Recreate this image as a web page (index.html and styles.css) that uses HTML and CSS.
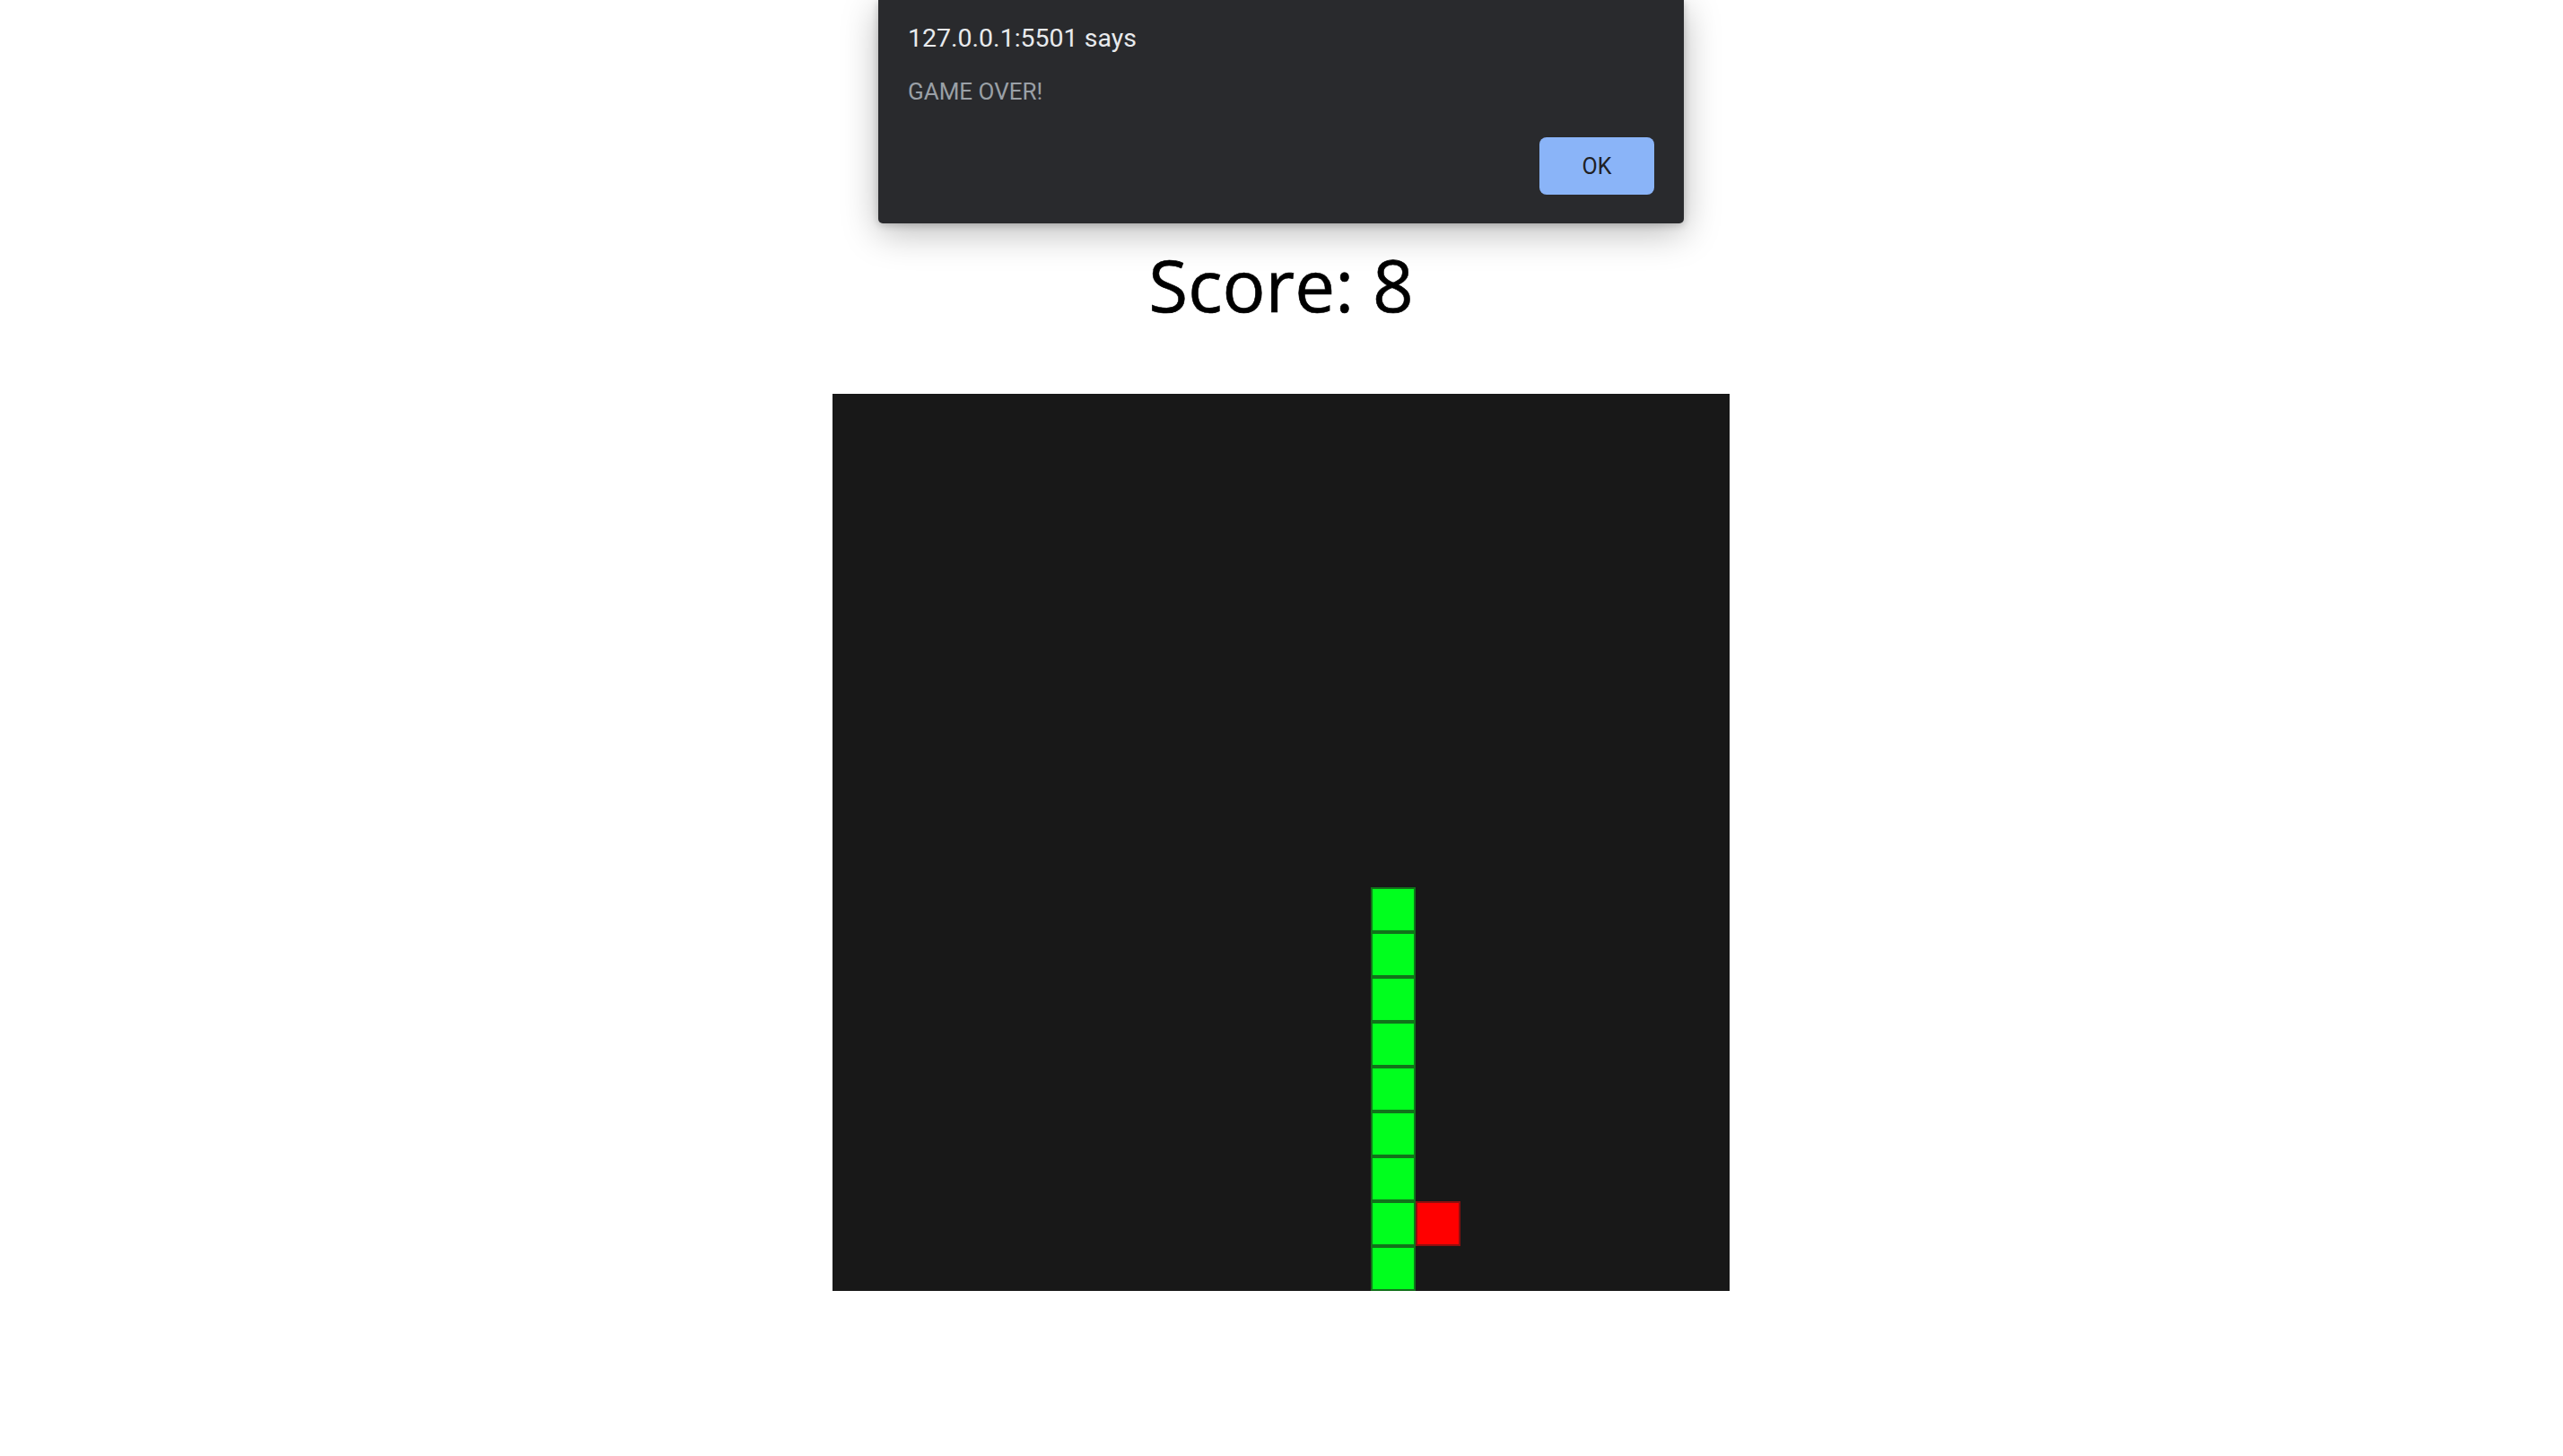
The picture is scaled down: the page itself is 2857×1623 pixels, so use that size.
FILE: index.html
```html
<!DOCTYPE html>
<html lang="en">
<head>
<meta charset="utf-8">
<title>Snake</title>
<link rel="stylesheet" href="styles.css">
</head>
<body>
<main class="page">
  <h1 class="score">Score: 8</h1>
  <div class="board">
    <div class="cell snake" style="grid-area: 12 / 13"></div>
    <div class="cell snake" style="grid-area: 13 / 13"></div>
    <div class="cell snake" style="grid-area: 14 / 13"></div>
    <div class="cell snake" style="grid-area: 15 / 13"></div>
    <div class="cell snake" style="grid-area: 16 / 13"></div>
    <div class="cell snake" style="grid-area: 17 / 13"></div>
    <div class="cell snake" style="grid-area: 18 / 13"></div>
    <div class="cell snake" style="grid-area: 19 / 13"></div>
    <div class="cell snake" style="grid-area: 20 / 13"></div>
    <div class="cell food" style="grid-area: 19 / 14"></div>
  </div>
</main>
<div class="alert" role="alertdialog">
  <div class="alert-title">127.0.0.1:5501 says</div>
  <div class="alert-msg">GAME OVER!</div>
  <div class="alert-actions">
    <button class="alert-ok">OK</button>
  </div>
</div>
</body>
</html>
```
FILE: styles.css
```css
html, body {
  margin: 0;
  padding: 0;
  background: #ffffff;
}

.page {
  display: flex;
  flex-direction: column;
  align-items: center;
  padding-top: 262px;
  padding-right: 1px;
}

.score {
  margin: 0;
  font-family: "Open Sans", "Noto Sans", sans-serif;
  font-weight: 400;
  font-size: 80px;
  line-height: 109px;
  color: #000;
  -webkit-text-stroke: 0.6px #000;
}

.board {
  margin-top: 68px;
  width: 1000px;
  height: 1000px;
  background: #181818;
  display: grid;
  grid-template-columns: repeat(20, 50px);
  grid-template-rows: repeat(20, 50px);
}

.cell {
  width: 50px;
  height: 50px;
  box-sizing: border-box;
}

.snake {
  background: #00ff1e;
  box-shadow: inset 0 0 0 2px #11731a;
}

.food {
  background: #ff0000;
  box-shadow: inset 0 0 0 2px #8e0f0f;
}

.alert {
  position: absolute;
  top: 0;
  left: 979px;
  width: 898px;
  height: 249px;
  box-sizing: border-box;
  padding: 27px 33px 32px 33px;
  background: #292a2d;
  border-radius: 0 0 5px 5px;
  box-shadow: 0 10px 40px rgba(0, 0, 0, 0.28), 0 2px 8px rgba(0, 0, 0, 0.2);
  font-family: Roboto, "Liberation Sans", sans-serif;
  display: flex;
  flex-direction: column;
}

.alert-title {
  font-size: 28.5px;
  line-height: 32px;
  color: #e8eaed;
}

.alert-msg {
  margin-top: 28px;
  font-size: 26px;
  line-height: 30px;
  color: #9aa0a6;
}

.alert-actions {
  margin-top: 36px;
  display: flex;
  justify-content: flex-end;
}

.alert-ok {
  width: 128px;
  height: 64px;
  border: none;
  border-radius: 8px;
  background: #8ab4f8;
  color: #202124;
  font-family: Roboto, "Liberation Sans", sans-serif;
  font-size: 25px;
  padding: 0;
}
```
